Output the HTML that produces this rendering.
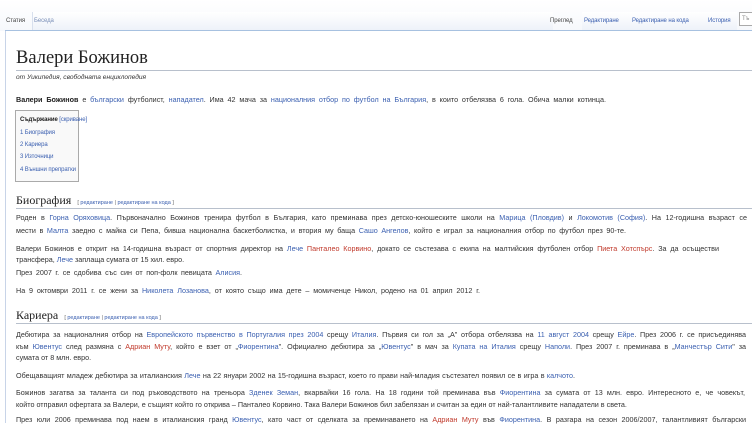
<!DOCTYPE html>
<html><head><meta charset="utf-8"><style>
body{margin:0;width:752px;height:423px;overflow:hidden;background:#fff;font-family:"Liberation Sans","DejaVu Sans",sans-serif;color:#333;position:relative}
.l{position:absolute;white-space:nowrap;font-size:7.2px;line-height:8px}
.j{text-align:justify;text-align-last:justify}
a{color:#3a5fb0;text-decoration:none}
.r{color:#c0392b}
.h{position:absolute;font-family:"Liberation Serif",serif;color:#222}
.e{font-family:"Liberation Sans",sans-serif;font-size:5.5px;color:#3a5fb0}
.e span{color:#666}
.hr{position:absolute;left:16px;right:0;height:1px;background:#b8c0cc}
.t{font-size:6px;letter-spacing:-0.1px}
</style></head><body>
<div style="position:absolute;left:0;top:0;width:752px;height:31px;background:linear-gradient(#fff,#f6f8fc)"></div>
<div style="position:absolute;left:5px;top:30px;width:1px;height:393px;background:#c8d4e8"></div>
<div style="position:absolute;left:5px;top:30px;width:747px;height:1px;background:#a7c1e0"></div>
<div style="position:absolute;left:32px;top:12px;width:520px;height:18px;border-left:1px solid #d8e0ee;background:linear-gradient(#fff,#eef2f9)"></div>
<div class="l t" style="left:6px;top:17px;color:#444">Статия</div>
<div class="l t" style="left:34px;top:17px;color:#7a8fb8">Беседа</div>
<div style="position:absolute;left:582px;top:12px;width:155px;height:18px;background:linear-gradient(#fff,#eef2f9)"></div>
<div class="l t" style="left:550px;top:17px;color:#444">Преглед</div>
<div class="l t" style="left:584px;top:17px"><a>Редактиране</a></div>
<div class="l t" style="left:632px;top:17px"><a>Редактиране на кода</a></div>
<div class="l t" style="left:708px;top:17px"><a>История</a></div>
<div style="position:absolute;left:739px;top:12px;width:20px;height:14px;border:1px solid #aaa;background:#fff;font-size:6px;color:#888;padding-left:2px;box-sizing:border-box;line-height:12px">Тъ</div>

<div class="h" style="left:16px;top:48px;font-size:18.5px">Валери Божинов</div>
<div class="hr" style="top:70px"></div>
<div class="l" style="left:16px;top:74px;font-style:italic;font-size:6.6px">от Уикипедия, свободната енциклопедия</div>
<div class="l j" style="left:16px;top:96px;width:590px"><b style="color:#222">Валери Божинов</b> е <a>български</a> футболист, <a>нападател</a>. Има 42 мача за <a>националния отбор по футбол на България</a>, в които отбелязва 6 гола. Обича малки котинца.</div>

<div style="position:absolute;left:15px;top:110px;width:62px;height:70px;border:1px solid #aaa;background:#f9f9f9"></div>
<div class="l t" style="left:20px;top:116px"><b style="color:#222">Съдържание</b> <a>[скриване]</a></div>
<div class="l t" style="left:20px;top:129px"><a>1 Биография</a></div>
<div class="l t" style="left:20px;top:141px"><a>2 Кариера</a></div>
<div class="l t" style="left:20px;top:153px"><a>3 Източници</a></div>
<div class="l t" style="left:20px;top:166px"><a>4 Външни препратки</a></div>

<div class="h" style="left:16px;top:193px;font-size:12px">Биография <span class="e">&nbsp; <span>[</span> редактиране <span>|</span> редактиране на кода <span>]</span></span></div>
<div class="hr" style="top:208px"></div>
<div class="l j" style="left:16px;top:214px;width:731px">Роден в <a>Горна Оряховица</a>. Първоначално Божинов тренира футбол в България, като преминава през детско-юношеските школи на <a>Марица (Пловдив)</a> и <a>Локомотив (София)</a>. На 12-годишна възраст се</div>
<div class="l j" style="left:16px;top:227px;width:610px">мести в <a>Малта</a> заедно с майка си Пепа, бивша национална баскетболистка, и втория му баща <a>Сашо Ангелов</a>, който е играл за националния отбор по футбол през 90-те.</div>
<div class="l j" style="left:16px;top:245px;width:703px">Валери Божинов е открит на 14-годишна възраст от спортния директор на <a>Лече</a> <a class="r">Панталео Корвино</a>, докато се състезава с екипа на малтийския футболен отбор <a class="r">Пиета Хотспърс</a>. За да осъществи</div>
<div class="l j" style="left:16px;top:256px;width:138px">трансфера, <a>Лече</a> заплаща сумата от 15 хил. евро.</div>
<div class="l j" style="left:16px;top:269px;width:226px">През 2007 г. се сдобива със син от поп-фолк певицата <a>Алисия</a>.</div>
<div class="l j" style="left:16px;top:287px;width:464px">На 9 октомври 2011 г. се жени за <a>Николета Лозанова</a>, от която също има дете – момиченце Никол, родено на 01 април 2012 г.</div>

<div class="h" style="left:16px;top:308px;font-size:12px">Кариера <span class="e">&nbsp; <span>[</span> редактиране <span>|</span> редактиране на кода <span>]</span></span></div>
<div class="hr" style="top:323px"></div>
<div class="l j" style="left:16px;top:331px;width:730px">Дебютира за националния отбор на <a>Европейското първенство в Португалия през 2004</a> срещу <a>Италия</a>. Първия си гол за „А" отбора отбелязва на <a>11 август 2004</a> срещу <a>Ейре</a>. През 2006 г. се присъединява</div>
<div class="l j" style="left:16px;top:343px;width:730px">към <a>Ювентус</a> след размяна с <a class="r">Адриан Муту</a>, който е взет от „<a>Фиорентина</a>". Официално дебютира за „<a>Ювентус</a>" в мач за <a>Купата на Италия</a> срещу <a>Наполи</a>. През 2007 г. преминава в „<a>Манчестър Сити</a>" за</div>
<div class="l" style="left:16px;top:354px">сумата от 8 млн. евро.</div>
<div class="l j" style="left:16px;top:372px;width:559px">Обещаващият младеж дебютира за италианския <a>Лече</a> на 22 януари 2002 на 15-годишна възраст, което го прави най-младия състезател появил се в игра в <a>калчото</a>.</div>
<div class="l j" style="left:16px;top:389px;width:729px">Божинов загатва за таланта си под ръководството на треньора <a>Зденек Земан</a>, вкарвайки 16 гола. На 18 години той преминава във <a>Фиорентина</a> за сумата от 13 млн. евро. Интересното е, че човекът,</div>
<div class="l j" style="left:16px;top:401px;width:584px">който отправил офертата за Валери, е същият който го открива – Панталео Корвино. Така Валери Божинов бил забелязан и считан за един от най-талантливите нападатели в света.</div>
<div class="l j" style="left:16px;top:416px;width:730px">През юли 2006 преминава под наем в италианския гранд <a>Ювентус</a>, като част от сделката за преминаването на <a class="r">Адриан Муту</a> във <a>Фиорентина</a>. В разгара на сезон 2006/2007, талантливият български</div>
</body></html>
